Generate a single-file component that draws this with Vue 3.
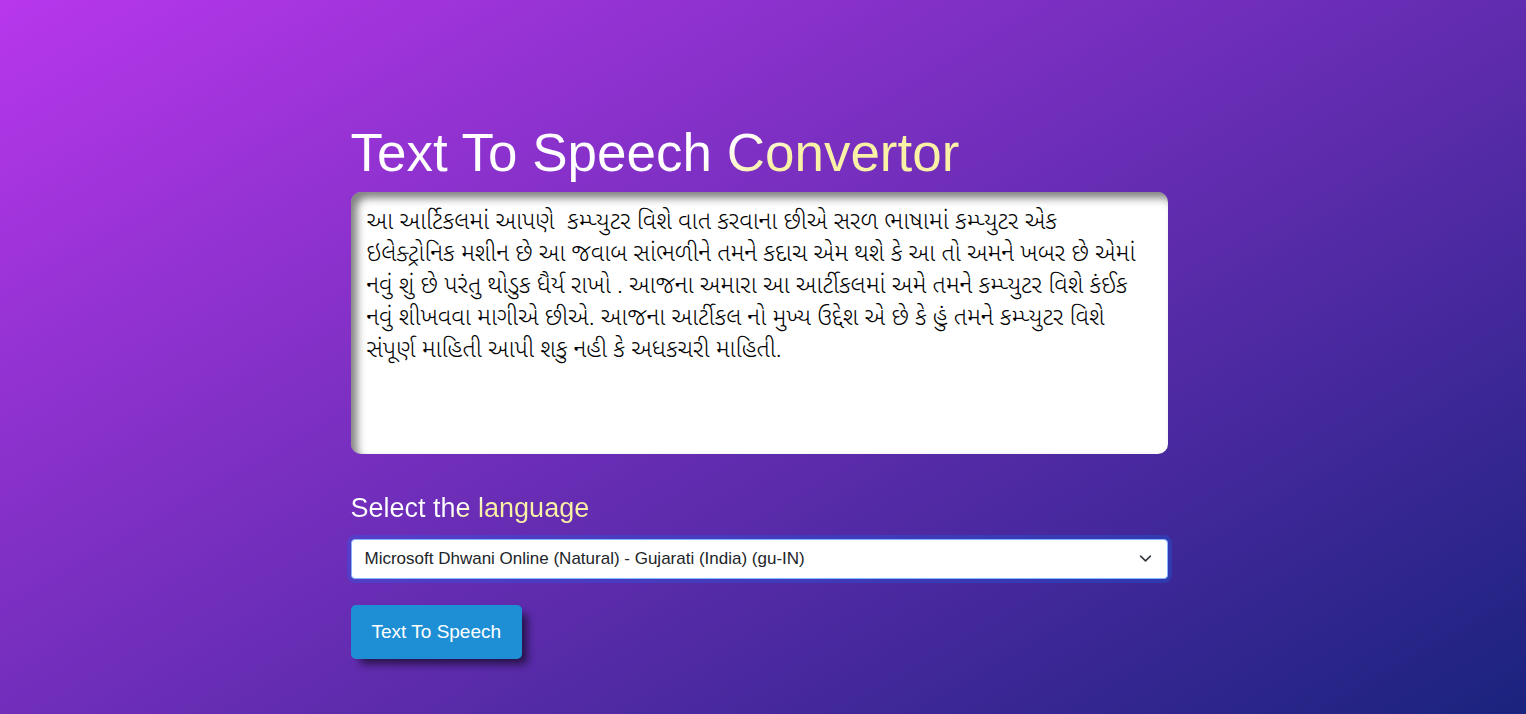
<script setup>
import { ref } from 'vue'

const text = ref(
  'આ આર્ટિકલમાં આપણે  કમ્પ્યુટર વિશે વાત કરવાના છીએ સરળ ભાષામાં કમ્પ્યુટર એક ઇલેક્ટ્રોનિક મશીન છે આ જવાબ સાંભળીને તમને કદાચ એમ થશે કે આ તો અમને ખબર છે એમાં નવું શું છે પરંતુ થોડુક ધૈર્ય રાખો . આજના અમારા આ આર્ટીકલમાં અમે તમને કમ્પ્યુટર વિશે કંઈક નવું શીખવવા માગીએ છીએ. આજના આર્ટીકલ નો મુખ્ય ઉદ્દેશ એ છે કે હું તમને કમ્પ્યુટર વિશે સંપૂર્ણ માહિતી આપી શકુ નહી કે અધકચરી માહિતી.'
)
const voices = ['Microsoft Dhwani Online (Natural) - Gujarati (India) (gu-IN)']
const voice = ref(voices[0])
</script>

<template>
  <main class="page">
    <div class="converter">
      <h1 class="title">Text To Speech Convertor</h1>
      <textarea v-model="text" class="speech-text" aria-label="Text to speak" spellcheck="false"></textarea>
      <label class="label" for="voice"><span class="label-text">Select the language</span></label>
      <div class="select-wrap">
        <select id="voice" v-model="voice" class="voice">
          <option v-for="v in voices" :key="v" :value="v">{{ v }}</option>
        </select>
        <svg class="chevron" viewBox="0 0 16 16" aria-hidden="true">
          <path d="m2 5 6 6 6-6" fill="none" stroke="#343a40" stroke-width="2" stroke-linecap="round" stroke-linejoin="round" />
        </svg>
      </div>
      <button class="speak" type="button">Text To Speech</button>
    </div>
  </main>
</template>

<style>
body {
  margin: 0;
}
</style>

<style scoped>
.page {
  box-sizing: border-box;
  min-height: 100vh;
  padding: 121px 24px 55px 16px;
  background: linear-gradient(150deg, #b837ec, #1a237e);
  font-family: "Liberation Sans", Arial, sans-serif;
}
.converter {
  display: flex;
  flex-direction: column;
  align-items: flex-start;
  max-width: 817px;
  margin: 0 auto;
}
.title,
.label-text {
  color: transparent;
  background: linear-gradient(150deg, #fff 45%, #f9f1a5 54%);
  background-clip: text;
  -webkit-background-clip: text;
}
.title {
  width: 100%;
  margin: 0 0 8px;
  font-size: 53px;
  line-height: 63px;
  font-weight: 400;
}
.speech-text {
  box-sizing: border-box;
  display: block;
  width: 100%;
  height: 262px;
  padding: 15px 18px 15px 16px;
  border: 0;
  border-radius: 10px;
  outline: 0;
  resize: none;
  background: #fff;
  color: #000;
  box-shadow: inset 6px 6px 8px rgba(0, 0, 0, 0.5);
  font-family: "Noto Sans Gujarati", "Liberation Sans", sans-serif;
  font-size: 24px;
  font-weight: 350;
  line-height: 32px;
}
.label {
  margin: 37px 0 14px;
  font-size: 27px;
  line-height: 34px;
}
.select-wrap {
  position: relative;
  width: 100%;
}
.voice {
  box-sizing: border-box;
  display: block;
  width: 100%;
  height: 40px;
  padding: 0 36px 0 13px;
  appearance: none;
  border: 1px solid #86b7fe;
  border-radius: 4px;
  outline: 0;
  background: #fff;
  color: #212529;
  box-shadow: 0 0 0 4px rgba(13, 110, 253, 0.25);
  font: 17px/24px "Liberation Sans", Arial, sans-serif;
}
.chevron {
  position: absolute;
  top: 13px;
  right: 16px;
  width: 13px;
  height: 13px;
  pointer-events: none;
}
.speak {
  margin-top: 26px;
  height: 54px;
  padding: 0 21px;
  border: 0;
  border-radius: 5px;
  background: #1e8fd5;
  color: #fff;
  box-shadow: 7px 7px 8px -2px rgba(0, 0, 0, 0.6);
  font: 19px/24px "Liberation Sans", Arial, sans-serif;
}
</style>
